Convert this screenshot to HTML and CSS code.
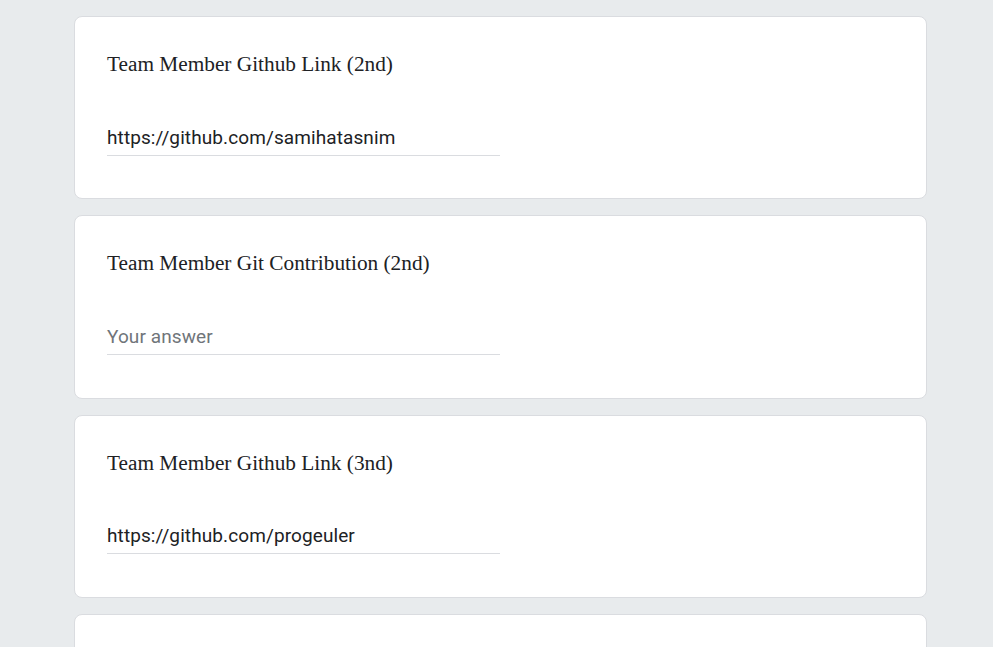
FILE: index.html
```html
<!DOCTYPE html>
<html>
<head>
<meta charset="utf-8">
<link rel="stylesheet" href="styles.css">
</head>
<body>
<main class="list">
  <section class="card">
    <div class="title">Team Member Github Link (2nd)</div>
    <div class="field"><span class="value">https://github.com/samihatasnim</span></div>
  </section>
  <section class="card">
    <div class="title">Team Member Git Contribution (2nd)</div>
    <div class="field"><span class="placeholder">Your answer</span></div>
  </section>
  <section class="card">
    <div class="title">Team Member Github Link (3nd)</div>
    <div class="field"><span class="value">https://github.com/progeuler</span></div>
  </section>
  <section class="card">
    <div class="title">Team Member Git Contribution (3nd)</div>
    <div class="field"><span class="placeholder">Your answer</span></div>
  </section>
</main>
</body>
</html>
```
FILE: styles.css
```css
html, body {
  margin: 0;
  padding: 0;
  background: #e8ebed;
  overflow: hidden;
  height: 647px;
}
.list {
  display: flex;
  flex-direction: column;
  gap: 16px;
  padding: 16px 0 0 74px;
  width: 853px;
}
.card {
  flex: none;
  background: #fff;
  border: 1px solid #dadce0;
  border-radius: 8px;
  padding: 35px 32px 0 32px;
  box-sizing: border-box;
  height: 183.33px;
}
.title {
  font-family: "Liberation Serif", "Times New Roman", serif;
  font-size: 21.3px;
  line-height: 24px;
  color: #202124;
}
.field {
  margin-top: 48.5px;
  width: 393px;
  border-bottom: 1px solid #dadce0;
  font-family: Roboto, "Noto Sans", sans-serif;
  font-size: 19px;
  letter-spacing: 0.1px;
  line-height: 26px;
  padding-bottom: 4px;
}
.value { color: #202124; }
.placeholder { color: #70757a; }
```
